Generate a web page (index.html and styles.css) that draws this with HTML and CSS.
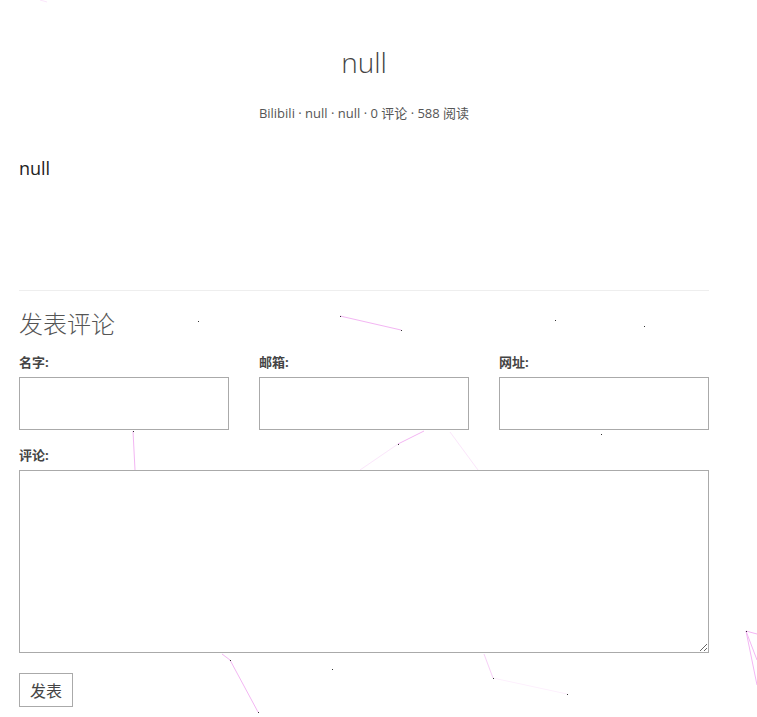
FILE: index.html
```html
<!DOCTYPE html>
<html lang="zh-CN">
<head>
<meta charset="utf-8">
<title>null</title>
<link rel="stylesheet" href="styles.css">
</head>
<body>
<svg class="particles" width="757" height="717" viewBox="0 0 757 717">
  <g stroke="#f3b6f3" stroke-width="1" fill="none">
    <line x1="340" y1="316" x2="401" y2="330"/>
    <line x1="133" y1="431" x2="135" y2="470"/>
    <line x1="398" y1="444" x2="424" y2="431"/>
    <line x1="398" y1="444" x2="360" y2="470" stroke="#fbe6fb"/>
    <line x1="450" y1="432" x2="478" y2="470" stroke="#fbe6fb"/>
    <line x1="230" y1="660" x2="258" y2="712"/>
    <line x1="222" y1="654" x2="230" y2="660"/>
    <line x1="484" y1="654" x2="493" y2="678" stroke="#f7d0f7"/>
    <line x1="493" y1="678" x2="567" y2="694" stroke="#fdf0fd"/>
    <line x1="746" y1="631" x2="757" y2="634"/>
    <line x1="746" y1="631" x2="757" y2="685"/>
    <line x1="746" y1="631" x2="757" y2="660"/>
    <line x1="40" y1="0" x2="47" y2="2" stroke="#fbe6fb"/>
  </g>
  <g fill="#333">
    <rect x="198" y="321" width="1" height="1"/>
    <rect x="340" y="316" width="1" height="1"/>
    <rect x="401" y="330" width="1" height="1"/>
    <rect x="555" y="320" width="1" height="1"/>
    <rect x="644" y="326" width="1" height="1"/>
    <rect x="133" y="431" width="1" height="1"/>
    <rect x="398" y="444" width="1" height="1"/>
    <rect x="601" y="434" width="1" height="1"/>
    <rect x="230" y="660" width="1" height="1"/>
    <rect x="332" y="669" width="1" height="1"/>
    <rect x="493" y="678" width="1" height="1"/>
    <rect x="567" y="694" width="1" height="1"/>
    <rect x="258" y="712" width="1" height="1"/>
    <rect x="746" y="631" width="1" height="1"/>
  </g>
</svg>
<main class="page">
  <header class="post-head">
    <h1 class="post-title">null</h1>
    <p class="post-meta">Bilibili · null · null · 0 评论 · 588 阅读</p>
  </header>
  <article class="post-body">null</article>
  <hr class="divider">
  <section class="comment">
    <h2 class="comment-title">发表评论</h2>
    <form class="comment-form">
      <div class="fields">
        <label class="field"><span class="label">名字:</span><input class="input" type="text"></label>
        <label class="field"><span class="label">邮箱:</span><input class="input" type="text"></label>
        <label class="field"><span class="label">网址:</span><input class="input" type="text"></label>
      </div>
      <label class="field"><span class="label">评论:</span><textarea class="textarea"></textarea></label>
      <div class="actions"><button class="submit" type="button">发表</button></div>
    </form>
  </section>
</main>
</body>
</html>
```
FILE: styles.css
```css
html, body {
  margin: 0;
  padding: 0;
  background: #fff;
}
body {
  font-family: "Open Sans", "Noto Sans CJK SC", sans-serif;
  color: #444;
  overflow: hidden;
}
.particles {
  position: absolute;
  left: 0;
  top: 0;
  pointer-events: none;
  z-index: 0;
}
.page {
  width: 690px;
  margin-left: 19px;
  padding-top: 42px;
  position: relative;
}
.post-head {
  text-align: center;
}
.post-title {
  margin: 0;
  font-size: 28px;
  font-weight: 300;
  line-height: 40px;
  color: #444;
}
.post-meta {
  margin: 21px 0 0;
  font-size: 13px;
  line-height: 20px;
  color: #555;
}
.post-body {
  margin-top: 32px;
  font-size: 18px;
  line-height: 26px;
  color: #222;
  height: 135px;
}
.divider {
  border: 0;
  border-top: 1px solid #eee;
  margin: 0;
}
.comment-title {
  margin: 14px 0 0;
  font-size: 24px;
  font-weight: 300;
  line-height: 36px;
  color: #555;
  font-family: "Noto Sans CJK SC", sans-serif;
}
.comment-form {
  display: flex;
  flex-direction: column;
  margin-top: 11px;
}
.fields {
  display: grid;
  grid-template-columns: repeat(3, 210px);
  column-gap: 30px;
}
.field {
  display: flex;
  flex-direction: column;
}
.label {
  font-size: 13px;
  font-weight: 700;
  line-height: 20px;
  color: #444;
  margin-bottom: 5px;
}
.input {
  box-sizing: border-box;
  width: 210px;
  height: 53px;
  border: 1px solid #aaa;
  margin: 0 0 15px;
  padding: 0 6px;
  font: inherit;
}
.textarea {
  box-sizing: border-box;
  width: 690px;
  height: 183px;
  border: 1px solid #aaa;
  margin: 0;
  padding: 6px;
  font: inherit;
}
.actions {
  margin-top: 20px;
}
.submit {
  box-sizing: border-box;
  width: 54px;
  height: 34px;
  border: 1px solid #aaa;
  background: #fff;
  color: #444;
  font-family: "Noto Sans CJK SC", sans-serif;
  font-size: 16px;
  padding: 0;
}
```
